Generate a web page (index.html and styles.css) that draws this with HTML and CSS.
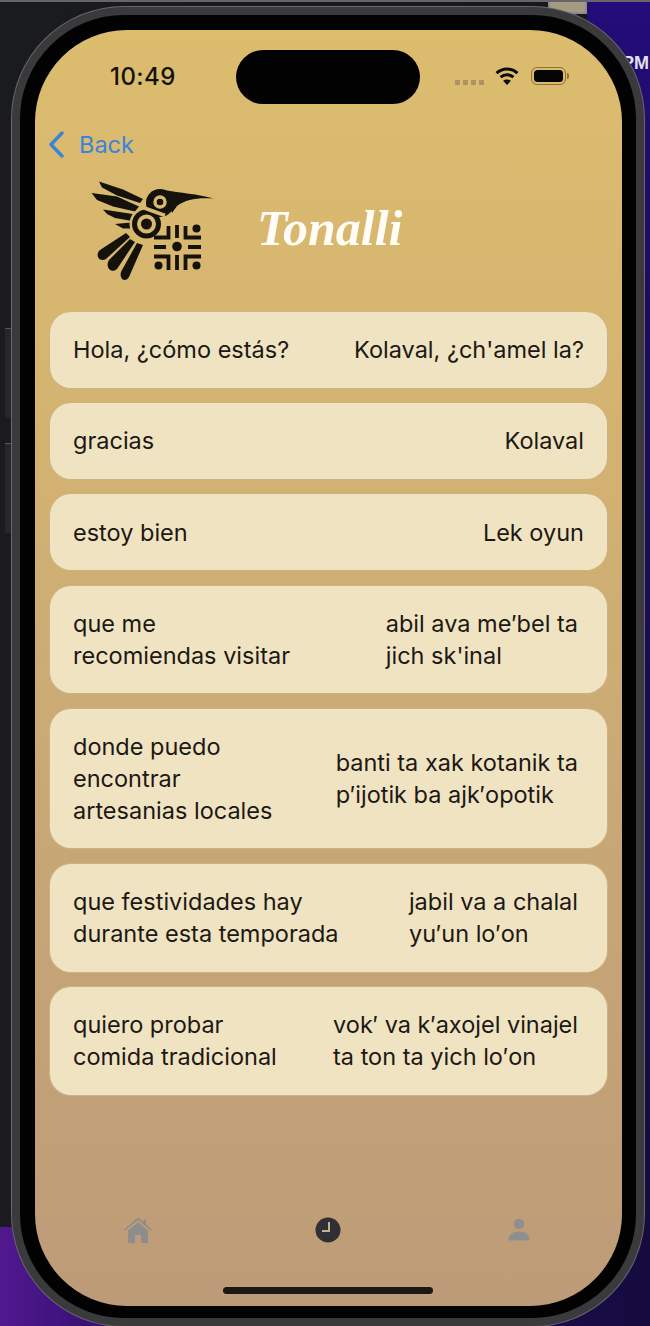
FILE: index.html
```html
<!DOCTYPE html>
<html lang="es">
<head>
<meta charset="utf-8">
<title>Tonalli</title>
<link rel="stylesheet" href="styles.css">
</head>
<body>
<div class="stage">
  <div class="wall wall-top"></div>
  <div class="wall wall-panel"></div>
  <div class="wall wall-purple"></div>
  <div class="wall wall-right"></div>
  <div class="thumb"></div>
  <div class="side-key side-key-a"></div>
  <div class="side-key side-key-b"></div>
  <div class="clock-pm">PM</div>

  <div class="phone">
    <main class="screen">
      <div class="status">
        <span class="time">10:49</span>
        <div class="island"></div>
        <div class="status-icons">
          <div class="signal"><i></i><i></i><i></i><i></i></div>
          <svg class="wifi" viewBox="0 0 24 18" aria-hidden="true">
            <path d="M1.5 6.2C7.5 .6 16.5 .6 22.5 6.2" fill="none" stroke="#0b0a08" stroke-width="3"/>
            <path d="M5.6 10.2c3.7-3.4 9.100-3.400 12.800 0" fill="none" stroke="#0b0a08" stroke-width="3"/>
            <path d="M12 18l-3.900-4.200c2.300-1.900 5.500-1.900 7.800 0z" fill="#0b0a08"/>
          </svg>
          <div class="battery"><div class="battery-fill"></div></div>
          <div class="battery-nub"></div>
        </div>
      </div>

      <div class="back">
        <svg class="chevron" viewBox="0 0 16 27" aria-hidden="true">
          <path d="M14 2L3 13.500 14 25" fill="none" stroke="#3a84da" stroke-width="3.400" stroke-linecap="round" stroke-linejoin="round"/>
        </svg>
        <span class="back-label">Back</span>
      </div>

      <header class="brand">
        <svg class="logo" viewBox="0 0 150 120" aria-hidden="true">
          <g fill="#15120c">
            <path d="M19 11.500L43 19.500 63 29 60 33 37 25.500 22 17.500z"/>
            <path d="M11.500 23L37 26.500 59 36.500 55 41.500 33 36.500 17 30z"/>
            <path d="M23 39.500L56 44.500 52 51 35 48 27 44z"/>
            <path d="M35 54L51 52.500 51 58.500 43 58.500z"/>
            <path d="M18 87C17 84 18 82 20 80L46 63 50 67 26 89C23 91 19 90 18 87z"/>
            <path d="M28 97C27 94 28 92 29 90L50 69 55 72 37 99C34 102 29 101 28 97z"/>
            <path d="M41 107C40 104 41 102 42 100L57 73 63 75 49 107C47 111 42 111 41 107z"/>
          </g>
          <circle cx="66.500" cy="54" r="17" fill="#d9b96e"/>
          <g fill="#15120c">
            <circle cx="80" cy="33" r="14"/>
            <path d="M84 20C100 23 118 24 133.500 28.500 118 27.500 106 29 97 36L92 43z"/>
            <circle cx="66.500" cy="54" r="14.500"/>
            <circle cx="97" cy="76.500" r="4.800"/>
            <circle cx="116.500" cy="58.500" r="4"/>
            <circle cx="78.500" cy="95.500" r="4"/>
            <circle cx="116.500" cy="95.500" r="4"/>
          </g>
          <g fill="none" stroke="#d9b96e">
            <path d="M63 37.500L85 45.500" stroke-width="3.500"/>
            <circle cx="66.500" cy="54" r="7.500" stroke-width="4"/>
            <circle cx="80" cy="32" r="5" stroke-width="3.400"/>
          </g>
          <g fill="none" stroke="#15120c" stroke-width="3.800">
            <path d="M74 67.500H88.500V56"/>
            <path d="M97 55V68"/>
            <path d="M105.500 56V67.500H121"/>
            <path d="M74 77H86"/>
            <path d="M108 77H121"/>
            <path d="M74 86.500H88.500V100"/>
            <path d="M97 85V100"/>
            <path d="M105.500 100V86.500H121"/>
          </g>
        </svg>
        <h1 class="title">Tonalli</h1>
      </header>

      <section class="phrases">
        <article class="card"><p>Hola, ¿cómo estás?</p><p>Kolaval, ¿ch'amel la?</p></article>
        <article class="card"><p>gracias</p><p>Kolaval</p></article>
        <article class="card"><p>estoy bien</p><p>Lek oyun</p></article>
        <article class="card"><p>que me<br>recomiendas visitar</p><p class="wrapped">abil ava me′bel ta<br>jich sk'inal</p></article>
        <article class="card"><p>donde puedo<br>encontrar<br>artesanias locales</p><p class="wrapped">banti ta xak kotanik ta<br>p′ijotik ba ajk′opotik</p></article>
        <article class="card"><p>que festividades hay<br>durante esta temporada</p><p class="wrapped">jabil va a chalal<br>yu′un lo′on</p></article>
        <article class="card"><p>quiero probar<br>comida tradicional</p><p class="wrapped">vok′ va k′axojel vinajel<br>ta ton ta yich lo′on</p></article>
      </section>

      <nav class="tabs">
        <svg class="tab" viewBox="0 0 28 28" aria-hidden="true">
          <path fill="#8e8d8c" fill-rule="evenodd" d="M14 1.500L19.500 6V3.500H22V8.100L28 13.500 27 14.500 14 4 1 14.500 0 13.500zM4 14.500L14 6.200 24 14.500V27H4zM11 19V27H17V19z"/>
        </svg>
        <svg class="tab" viewBox="0 0 28 28" aria-hidden="true">
          <circle cx="14" cy="14" r="12.500" fill="#2f3034"/>
          <path d="M15 6V15H8" fill="none" stroke="#c8b08c" stroke-width="2"/>
        </svg>
        <svg class="tab" viewBox="0 0 28 28" aria-hidden="true">
          <circle cx="14" cy="8" r="5.200" fill="#8e8f90"/>
          <path d="M3.500 24.500C3.500 18.500 8 15.500 14 15.500S24.500 18.500 24.500 24.500z" fill="#8e8f90"/>
        </svg>
      </nav>
      <div class="home-indicator"></div>
    </main>
  </div>
</div>
</body>
</html>
```

FILE: styles.css
```css
* { box-sizing: border-box; }

html, body { margin: 0; padding: 0; background: #1b1c20; }

.stage {
  position: relative;
  width: 650px;
  height: 1326px;
  padding: 7px 0 0 12px;
  overflow: hidden;
  background: #1b1c20;
  font-family: Inter, "Liberation Sans", sans-serif;
}

/* desktop behind the device */
.wall { position: absolute; }
.wall-top { left: 0; top: 0; width: 650px; height: 2px; background: #66666a; z-index: 2; }
.wall-panel { left: 0; top: 2px; width: 587px; height: 1225px; background: linear-gradient(90deg, #1a1b1f, #17181c); }
.wall-purple { left: 0; top: 1227px; width: 650px; height: 99px; background: linear-gradient(90deg, #52188f 0, #3a1278 12%, #24105c 60%, #150b3e 100%); }
.wall-right { left: 587px; top: 2px; width: 63px; height: 1225px; background: linear-gradient(180deg, #240c7a 0, #1d0c62 20%, #150b3e 100%); }
.thumb { position: absolute; left: 548px; top: 0; width: 39px; height: 14px; background: #a39a80; border: 2px solid #8b8b90; border-top: 0; }
.side-key { position: absolute; left: 5px; width: 7px; height: 90px; background: #26272b; border-top: 1px solid #55565a; }
.side-key-a { top: 328px; }
.side-key-b { top: 443px; }
.clock-pm { position: absolute; left: 622px; top: 53px; font: 700 18px "Liberation Sans", sans-serif; color: #e4e2ee; }

/* device */
.phone {
  position: relative;
  width: 632px;
  height: 1319px;
  padding: 15px 14px 12px 15px;
  border: 8px solid #3a3a3c;
  border-radius: 112px;
  background: #020203;
  box-shadow: 0 0 0 1px #68686d;
}

.screen {
  position: relative;
  display: flex;
  flex-direction: column;
  width: 587px;
  height: 1276px;
  overflow: hidden;
  border-radius: 92px;
  background: linear-gradient(180deg, #dcbd6e 0%, #d6b570 25%, #c9a876 60%, #bd9b78 100%);
  color: #1c1813;
}

.status {
  display: flex;
  align-items: flex-start;
  height: 74px;
  padding: 20px 0 0 75px;
}
.time { width: 126px; padding-top: 14px; font-size: 24px; font-weight: 500; line-height: 26px; letter-spacing: .45px; color: #15120c; }
.island { flex: none; width: 184px; height: 54px; border-radius: 27px; background: #020203; }
.status-icons { display: flex; align-items: center; height: 18px; margin: 17px 0 0 35px; }
.signal { display: flex; gap: 3px; margin: 12px 11px 0 0; }
.signal i { display: block; width: 5px; height: 5px; background: #ab9260; }
.wifi { width: 24px; height: 18px; margin-right: 12px; }
.battery { width: 35px; height: 18px; padding: 2px; border: 1.5px solid #8c7238; border-radius: 6px; }
.battery-fill { width: 100%; height: 100%; border-radius: 3.5px; background: #050505; }
.battery-nub { width: 2px; height: 6px; margin-left: 1px; border-radius: 0 2px 2px 0; background: #8c7238; }

.back {
  display: flex;
  align-items: center;
  height: 27px;
  margin-top: 27px;
  padding-left: 13px;
}
.chevron { width: 16px; height: 27px; }
.back-label { margin-left: 15px; font-size: 23.500px; line-height: 27px; color: #3a84da; }

.brand {
  display: flex;
  align-items: flex-start;
  height: 120px;
  margin-top: 12px;
  padding-left: 45px;
}
.logo { width: 150px; height: 120px; flex: none; }
.title {
  margin: 28px 0 0 27px;
  font-family: "Liberation Serif", serif;
  font-style: italic;
  font-weight: 700;
  font-size: 50px;
  line-height: 60px;
  color: #fffdf6;
}

.phrases {
  display: flex;
  flex-direction: column;
  gap: 15.6px;
  margin-top: 22px;
  padding: 0 15px;
}
.card {
  display: flex;
  align-items: center;
  justify-content: space-between;
  padding: 22.300px 23px 21.300px;
  border-radius: 21px;
  background: #f0e3c2;
  box-shadow: 0 0 0 1px #cdb384;
}
.card p { margin: 0; font-size: 23.500px; line-height: 32px; }
.card p.wrapped { padding-right: 6px; }

.tabs {
  display: grid;
  grid-template-columns: repeat(3, 1fr);
  justify-items: center;
  margin-top: auto;
  padding: 0 8px;
}
.tab { width: 28px; height: 28px; }

.home-indicator {
  width: 210px;
  height: 7px;
  margin: 43px 0 12px 188px;
  border-radius: 4px;
  background: #1b1815;
}
```
